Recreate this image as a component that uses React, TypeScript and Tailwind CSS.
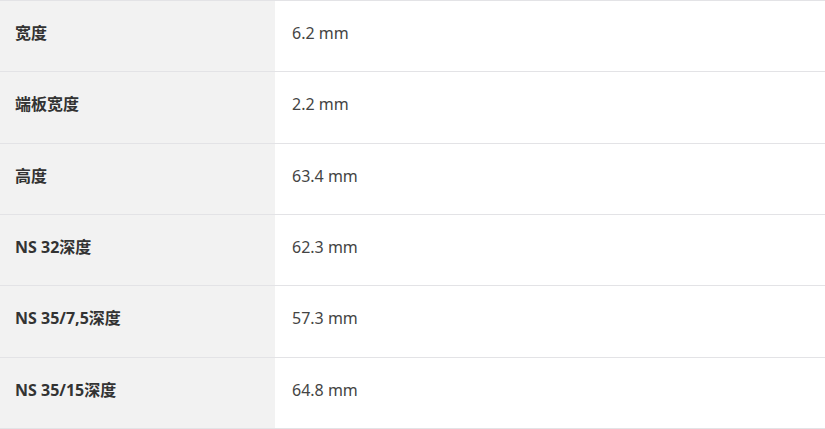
import React from "react";

const specs = [
  { label: "宽度", value: "6.2 mm" },
  { label: "端板宽度", value: "2.2 mm" },
  { label: "高度", value: "63.4 mm" },
  { label: "NS 32深度", value: "62.3 mm" },
  { label: "NS 35/7,5深度", value: "57.3 mm" },
  { label: "NS 35/15深度", value: "64.8 mm" },
];

export default function App() {
  return (
    <div className="w-[825px] bg-white font-['Noto_Sans','Noto_Sans_CJK_SC',sans-serif] text-[16px]">
      <div className="border-t border-[#e3e3e6]">
        {specs.map((row) => (
          <div key={row.label} className="flex h-[71.33px] border-b border-[#e3e3e6]">
            <div className="w-[275px] bg-[#f2f2f2] pl-[15px] pt-[20px] font-bold text-[#333333] leading-6">
              {row.label}
            </div>
            <div className="flex-1 pl-[17px] pt-[20px] text-[#444444] leading-6">{row.value}</div>
          </div>
        ))}
      </div>
    </div>
  );
}
